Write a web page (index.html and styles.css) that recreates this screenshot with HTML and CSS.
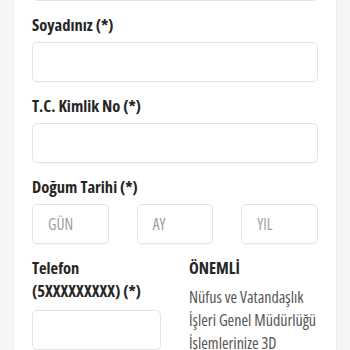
FILE: index.html
```html
<!DOCTYPE html>
<html lang="tr">
<head>
<meta charset="utf-8">
<link rel="stylesheet" href="styles.css">
</head>
<body>
<div class="page">
  <div class="card">
    <div class="prev-input"></div>
    <div class="group">
      <label class="label">Soyadınız (*)</label>
      <div class="input"></div>
    </div>
    <div class="group">
      <label class="label">T.C. Kimlik No (*)</label>
      <div class="input"></div>
    </div>
    <div class="group">
      <label class="label">Doğum Tarihi (*)</label>
      <div class="row3">
        <div class="input ph">GÜN</div>
        <div class="input ph">AY</div>
        <div class="input ph">YIL</div>
      </div>
    </div>
    <div class="row2">
      <div class="group">
        <label class="label tel">Telefon<br>(5XXXXXXXXX) (*)</label>
        <div class="input"></div>
      </div>
      <div class="note">
        <div class="label">ÖNEMLİ</div>
        <p class="note-text">Nüfus ve Vatandaşlık İşleri Genel Müdürlüğü İşlemlerinize 3D<br>Secure ile güvenli ödeme yapabilirsiniz.</p>
      </div>
    </div>
  </div>
</div>
</body>
</html>
```

FILE: styles.css
```css
html, body {
  margin: 0;
  padding: 0;
  background: #f6f6f6;
  height: 100%;
  overflow: hidden;
}
.page {
  padding: 0 13px;
}
.card {
  background: #fff;
  border-left: 1px solid #ececec;
  border-right: 1px solid #ececec;
  padding: 0 18px 0 18px;
  font-family: "Open Sans", "Roboto Condensed", sans-serif;
  font-stretch: 75%;
  height: 400px;
}
.prev-input {
  height: 40px;
  margin-top: -39px;
  border: 1px solid #e4e4e4;
  border-radius: 5px;
  box-sizing: border-box;
}
.group {
  margin-top: 12px;
}
.label {
  display: block;
  font-weight: bold;
  font-size: 16.5px;
  line-height: 23px;
  color: #262626;
  margin-bottom: 6px;
}
.label.tel {
  margin-bottom: 8px;
}
.input {
  height: 40px;
  border: 1px solid #e4e4e4;
  border-radius: 5px;
  box-sizing: border-box;
  box-shadow: 0 1px 1px rgba(0,0,0,0.03);
}
.ph {
  font-size: 15.5px;
  color: #9e9e9e;
  padding: 0 15px;
  line-height: 38px;
}
.row3 {
  display: grid;
  grid-template-columns: 1fr 1fr 1fr;
  column-gap: 28px;
}
.row2 {
  display: grid;
  grid-template-columns: 1fr 1fr;
  column-gap: 28px;
}
.note {
  margin-top: 12px;
}
.note .label {
  margin-bottom: 7px;
}
.note-text {
  margin: 0;
  font-size: 16px;
  line-height: 23px;
  color: #555;
}
```
